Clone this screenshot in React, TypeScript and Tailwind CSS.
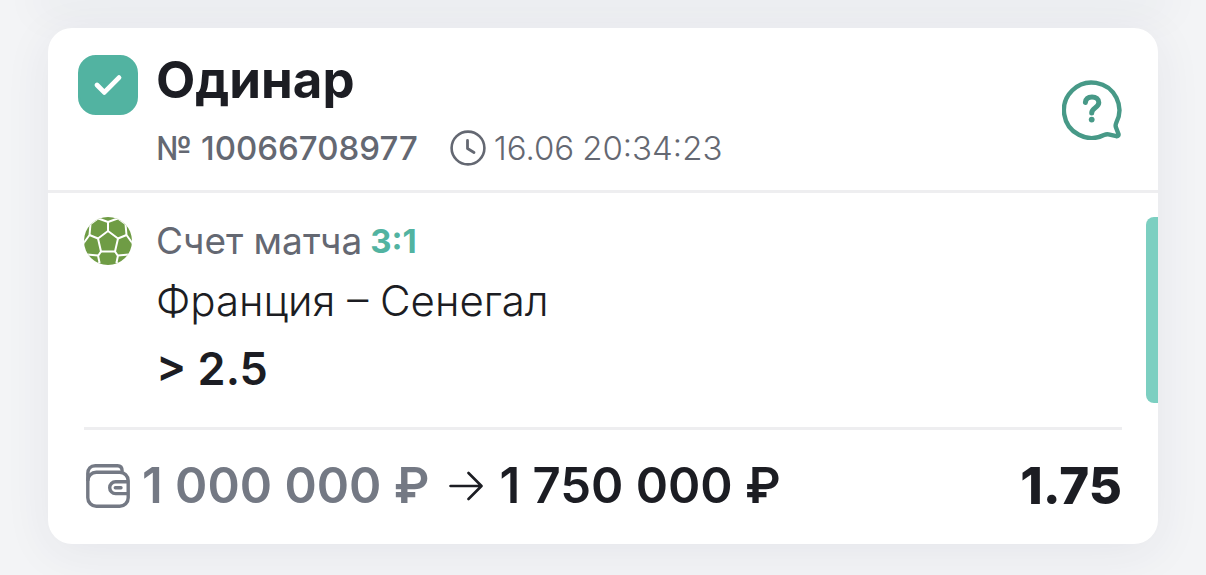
import type { ReactNode } from "react";

const bet = {
  type: "Одинар",
  number: "№ 10066708977",
  date: "16.06",
  time: "20:34:23",
  scoreLabel: "Счет матча",
  score: "3:1",
  match: "Франция – Сенегал",
  outcome: "> 2.5",
  stake: "1 000 000 ₽",
  payout: "1 750 000 ₽",
  odds: "1.75",
};

function ClockIcon() {
  return (
    <svg viewBox="0 0 36 36" className="size-9 shrink-0" fill="none" stroke="currentColor" aria-hidden="true">
      <circle cx="18" cy="18" r="16.4" strokeWidth="2.6" />
      <path d="M17.5 10.5v8l6.5 4" strokeWidth="2.8" strokeLinecap="round" strokeLinejoin="round" />
    </svg>
  );
}

function HelpIcon() {
  return (
    <svg viewBox="0 0 60 60" className="size-15" fill="none" stroke="currentColor" strokeLinecap="round" strokeLinejoin="round" aria-hidden="true">
      <path
        strokeWidth="4.4"
        d="M54.2 43A27.7 27.7 0 1 0 42 55C43.8 54.2 45 54 46.5 54.3L54.4 56.2C56.2 56.4 56.8 55.4 56.5 54L53.8 47C53.4 45.6 53.6 44.4 54.2 43Z"
      />
      <path strokeWidth="5" d="M23.4 22.4C23.8 18.8 26.4 17 30 17C34 17 36.8 19.2 36.8 22.6C36.8 28 29.7 27.6 29.7 33" />
      <circle cx="29.7" cy="39.6" r="2.9" fill="currentColor" stroke="none" />
    </svg>
  );
}

function BallIcon() {
  return (
    <svg viewBox="0 0 48 48" className="size-12 shrink-0" aria-hidden="true">
      <clipPath id="ball">
        <circle cx="24" cy="24" r="24" />
      </clipPath>
      <g clipPath="url(#ball)">
        <rect width="48" height="48" fill="#6f9c45" />
        <g fill="none" stroke="#fff" strokeWidth="2" strokeLinejoin="round">
          <path d="M24 14L34 21.5L31 34.5H17L14 21.5Z" />
          <path d="M24 14V5M34 21.5L42.5 18M31 34.5L34 39M17 34.5L14 39M14 21.5L5.5 18" />
          <path d="M13 1L24 5L35 1M14 1.5L6.5 7L5.5 18L-1 27M34 1.5L41.5 7L42.5 18L49 27" />
          <path d="M3 37.5L14 38.5L15.5 45.5L12 49M45 37.5L34 38.5L32.5 45.5L36 49" />
        </g>
      </g>
    </svg>
  );
}

function WalletIcon() {
  return (
    <svg viewBox="0 0 44 44" className="size-11 shrink-0" fill="none" stroke="currentColor" strokeWidth="3.4" strokeLinejoin="round" aria-hidden="true">
      <rect x="1.8" y="8.2" width="40.4" height="34" rx="8.5" />
      <path d="M1.8 17V9.5C1.8 4.6 4.4 1.8 9.3 1.8H31.5C34.8 1.8 36.2 3.6 36.2 7.5" />
      <path d="M42.2 17.8H29.6A5.9 5.9 0 0 0 29.6 29.6H42.2" />
      <path d="M29.3 23.7H35" strokeLinecap="round" />
    </svg>
  );
}

function ArrowIcon() {
  return (
    <svg viewBox="0 0 34 30" className="h-7.5 w-8.5 shrink-0" fill="none" stroke="currentColor" strokeWidth="2.6" strokeLinecap="round" strokeLinejoin="round" aria-hidden="true">
      <path d="M1.5 15H32M19.5 2L32.5 15L19.5 28" />
    </svg>
  );
}

function Card({ children }: { children?: ReactNode }) {
  return (
    <article className="rounded-3xl bg-white shadow-[0_8px_48px_rgba(40,44,80,0.07)]">
      {children}
    </article>
  );
}

export default function App() {
  return (
    <main className="overflow-hidden bg-[#f3f4f6] px-12 pb-8 font-[Inter,'Noto_Sans',sans-serif] text-[#1c1d23]">
      {/* shadow of the card above */}
      <div className="mb-7 shadow-[0_0_40px_12px_rgba(40,44,80,0.06)]" />
      <Card>
        <header className="flex items-start justify-between border-b-3 border-[#eeeef0] pt-6 pr-9 pb-4.5 pl-7.5">
          <div className="flex gap-4.5">
            <label className="mt-[3px] grid size-15 shrink-0">
              <input
                type="checkbox"
                defaultChecked
                aria-label={bet.type}
                className="peer col-start-1 row-start-1 size-15 appearance-none rounded-[18px] border-2 border-[#52b3a1] checked:bg-[#52b3a1]"
              />
              <svg viewBox="0 0 60 60" className="pointer-events-none invisible col-start-1 row-start-1 size-15 peer-checked:visible" fill="none" stroke="#fff" strokeWidth="4.8" strokeLinecap="round" strokeLinejoin="round" aria-hidden="true">
                <path d="M19 30L26.3 37.4L41 22.6" />
              </svg>
            </label>
            <div>
              <h2 className="text-[51px] leading-14 font-bold">{bet.type}</h2>
              <div className="mt-4 flex h-12 items-center text-[33px] leading-12 text-[#646872]">
                <span className="font-medium">{bet.number}</span>
                <time className="ml-8 flex items-center gap-2 font-light">
                  <ClockIcon />
                  <span>{bet.date}</span>
                  <span>{bet.time}</span>
                </time>
              </div>
            </div>
          </div>
          <button type="button" aria-label="Помощь" className="mt-7 text-[#479987]">
            <HelpIcon />
          </button>
        </header>

        <section className="flex justify-between pt-6 pl-9">
          <div className="flex gap-6 pb-1.5">
            <BallIcon />
            <div>
              <p className="flex gap-2 text-[37px] leading-12 text-[#646872]">
                <span>{bet.scoreLabel}</span>
                <span className="text-[33px] font-bold text-[#52b3a1]">{bet.score}</span>
              </p>
              <p className="mt-3 text-[42px] leading-12 font-light">{bet.match}</p>
              <p className="mt-4 text-[45px] leading-14 font-semibold">{bet.outcome}</p>
            </div>
          </div>
          <div className="w-3 rounded-l-lg bg-[#7ccfc1]" />
        </section>

        <footer className="mx-9 mt-6 flex items-center justify-between border-t-3 border-[#eeeef0] pt-7 pb-7.5 text-[49px] leading-14 font-semibold">
          <div className="flex items-center pl-0.5">
            <span className="flex items-center gap-3 text-[#747984]">
              <WalletIcon />
              {bet.stake}
            </span>
            <span className="ml-5 flex items-center gap-4">
              <ArrowIcon />
              {bet.payout}
            </span>
          </div>
          <span className="text-[51px] font-extrabold">{bet.odds}</span>
        </footer>
      </Card>
    </main>
  );
}
